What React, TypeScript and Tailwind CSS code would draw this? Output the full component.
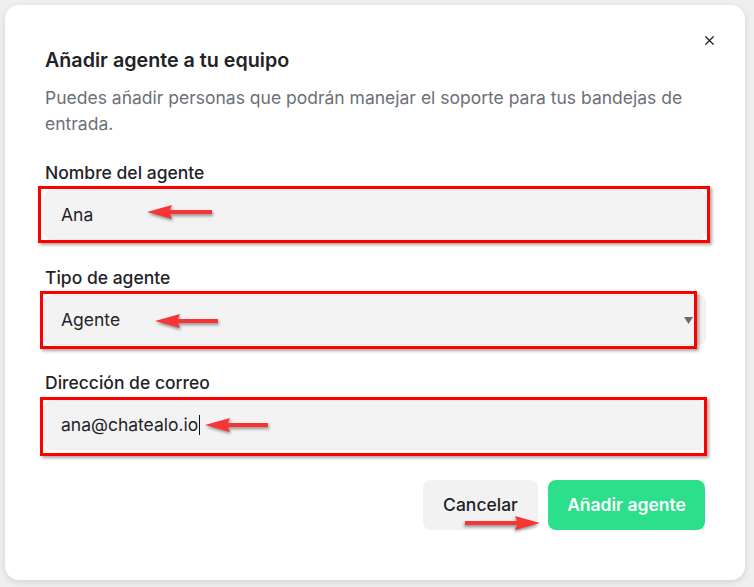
import { X } from 'lucide-react';

// red annotation arrow, tip on the left unless flipped
function Arrow({ className, length, dir = 'left' }: { className: string; length: number; dir?: 'left' | 'right' }) {
    return (
        <svg
            width={length + 2}
            height="18"
            viewBox={`0 0 ${length + 2} 18`}
            className={`pointer-events-none absolute drop-shadow-[1px_2px_1.5px_rgba(0,0,0,0.4)] ${className} ${dir === 'right' ? 'scale-x-[-1]' : ''}`}
        >
            <rect x="22" y="7" width={length - 21} height="4" fill="#f83434" />
            <polygon points="1,9 26,2 23,9 26,16" fill="#f83434" />
        </svg>
    );
}

function Highlight({ className }: { className: string }) {
    return (
        <div
            className={`pointer-events-none absolute border-[3px] border-[#ff0000] shadow-[2px_2px_3px_rgba(0,0,0,0.35)] ${className}`}
        />
    );
}

export default function App() {
    const inputBase =
        'flex h-[50px] w-full items-center rounded-lg border border-[#ececec] bg-[#f3f3f3] px-4 text-[17.5px] text-[#1f2328]';
    const labelCls = 'ml-px block text-[17.5px] leading-6 font-medium text-[#1f2328]';

    return (
        <div className="h-[587px] w-[754px] overflow-hidden bg-[#efefef] pl-[5px] pt-[5px] font-['Inter','Noto_Sans',sans-serif]">
            <div className="relative h-[575px] w-[740px] rounded-[14px] bg-white px-[39px] pt-[41px] shadow-[0_2px_6px_rgba(0,0,0,0.12)]">
                <button className="absolute right-[28px] top-[28px] text-[#222]">
                    <X className="h-[15px] w-[15px]" strokeWidth={2} />
                </button>

                <h2 className="ml-px text-[19.7px] leading-7 font-semibold text-[#1f2328]">Añadir agente a tu equipo</h2>
                <p className="ml-px mt-[11px] text-[17.5px] leading-[26px] text-[#6b7079]">
                    Puedes añadir personas que podrán manejar el soporte para tus bandejas de entrada.
                </p>

                <div className="mt-6 flex flex-col gap-[26px]">
                    <div className="flex flex-col gap-[5px]">
                        <label className={labelCls}>Nombre del agente</label>
                        <div className="relative">
                            <div className={inputBase}>Ana</div>
                            <Highlight className="-bottom-[3px] -left-[6px] -right-[4px] -top-[4px]" />
                            <Arrow length={65} className="left-[102px] top-[13px]" />
                        </div>
                    </div>

                    <div className="flex flex-col gap-[5px]">
                        <label className={labelCls}>Tipo de agente</label>
                        <div className="relative">
                            <div className={`${inputBase} justify-between pr-[12px]`}>
                                <span>Agente</span>
                                <svg width="9" height="7" viewBox="0 0 9 7">
                                    <polygon points="0,0 9,0 4.5,7" fill="#6b6b6b" />
                                </svg>
                            </div>
                            <Highlight className="-bottom-[4px] -left-[4px] -top-[4px] right-[9px]" />
                            <Arrow length={63} className="left-[110px] top-[17px]" />
                        </div>
                    </div>

                    <div className="flex flex-col gap-[5px]">
                        <label className={labelCls}>Dirección de correo</label>
                        <div className="relative">
                            <div className={`${inputBase} border-[#2bdf8b]`}>
                                <span>ana@chatealo.io</span>
                                <span className="ml-px inline-block h-[20px] w-px bg-[#111]" />
                            </div>
                            <Highlight className="-bottom-[6px] -left-[4px] -right-[1px] -top-[3px]" />
                            <Arrow length={63} className="left-[160px] top-[16px]" />
                        </div>
                    </div>
                </div>

                <div className="relative mt-[30px] flex justify-end gap-[10px] pr-px">
                    <button className="h-[50px] w-[115px] rounded-lg bg-[#f2f2f2] text-[17.5px] font-medium text-[#1f2328]">
                        Cancelar
                    </button>
                    <button className="h-[50px] w-[157px] rounded-lg bg-[#2bdf8b] text-[17.5px] font-semibold text-white">
                        Añadir agente
                    </button>
                    <Arrow dir="right" length={75} className="left-[420px] top-[34px]" />
                </div>
            </div>
        </div>
    );
}
